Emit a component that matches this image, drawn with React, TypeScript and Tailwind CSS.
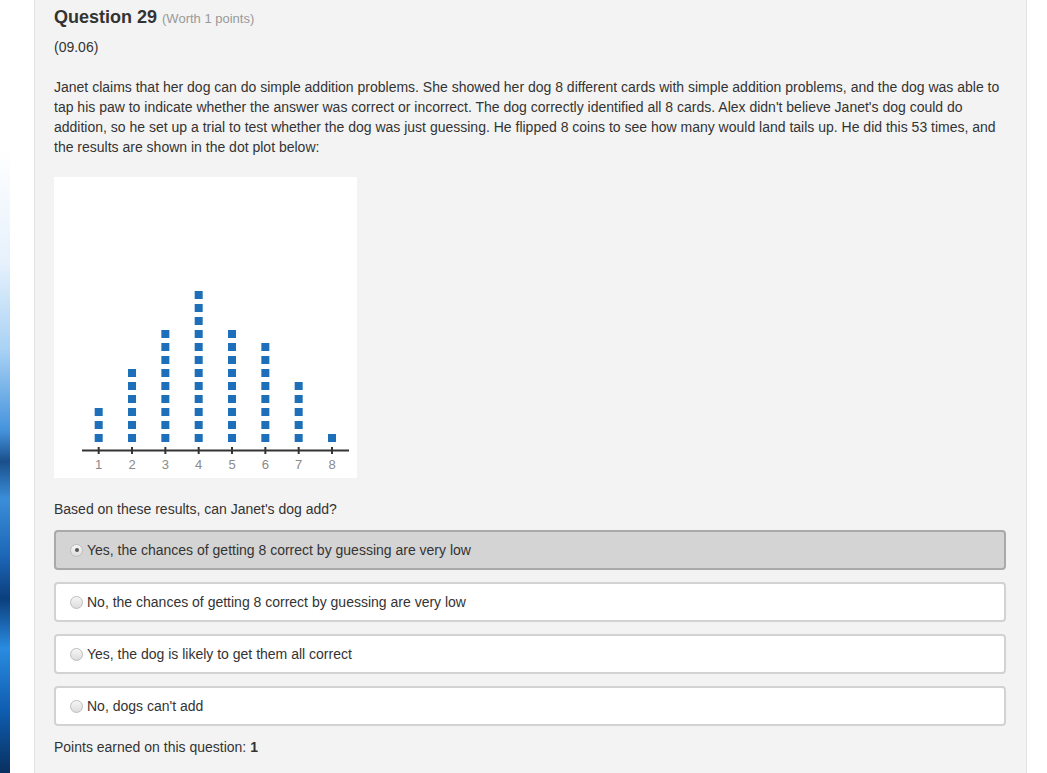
import React from "react";

const counts = [3, 6, 9, 12, 9, 8, 5, 1];

function DotPlot() {
  const x0 = 44.7;
  const step = 33.33;
  return (
    <svg width="303" height="301" viewBox="0 0 303 301" className="block">
      <rect x="0" y="0" width="303" height="301" fill="#ffffff" />
      {counts.map((n, i) =>
        Array.from({ length: n }).map((_, j) => (
          <rect
            key={`${i}-${j}`}
            x={x0 + step * i - 4}
            y={257 - 13 * j}
            width="8"
            height="8"
            fill="#1c6fb8"
          />
        ))
      )}
      <line x1="28" y1="273.5" x2="295" y2="273.5" stroke="#333" strokeWidth="2" />
      {counts.map((_, i) => (
        <g key={i}>
          <line x1={x0 + step * i} y1="270" x2={x0 + step * i} y2="277" stroke="#333" strokeWidth="2" />
          <text
            x={x0 + step * i}
            y="292"
            textAnchor="middle"
            fontSize="13"
            fill="#8a8a8a"
            fontFamily="Liberation Sans, Arial, sans-serif"
          >
            {i + 1}
          </text>
        </g>
      ))}
    </svg>
  );
}

function Radio({ checked }: { checked?: boolean }) {
  return (
    <span className="relative inline-flex h-[13px] w-[13px] shrink-0 items-center justify-center rounded-full border border-[#bdbdbd] bg-[linear-gradient(to_bottom,#f6f6f6,#dcdcdc)]">
      {checked && <span className="h-[4px] w-[4px] rounded-full bg-[#555]" />}
    </span>
  );
}

const options = [
  "Yes, the chances of getting 8 correct by guessing are very low",
  "No, the chances of getting 8 correct by guessing are very low",
  "Yes, the dog is likely to get them all correct",
  "No, dogs can't add",
];

export default function App() {
  return (
    <div className="flex h-[773px] w-full overflow-hidden bg-white font-['Liberation_Sans',Arial,sans-serif] text-[14px] text-[#333]">
      {/* left decoration */}
      <div className="flex w-[34px] shrink-0 flex-col">
        <div className="h-[150px]" />
        <div className="w-[10px] flex-1 bg-[linear-gradient(to_bottom,#ffffff_0%,#e6f1fc_18%,#a9d2f4_32%,#4593dd_45%,#1a4f8c_50%,#3a8ed8_56%,#1d67b8_65%,#0b3f7d_72%,#2a8be0_80%,#0f5db0_90%,#08305f_100%)]" />
      </div>

      {/* question panel */}
      <div className="w-[993px] shrink-0 border-x border-[#e2e2e2] bg-[#f3f3f3] px-[19px] pt-[7px]">
        <div className="flex h-[20px] items-baseline gap-[5px] leading-[20px]">
          <span className="text-[18px] font-bold text-[#333]">Question 29</span>
          <span className="text-[13px] text-[#999]">(Worth 1 points)</span>
        </div>
        <p className="mt-[10px] leading-[20px]">(09.06)</p>
        <p className="mt-[20px] w-[952px] leading-[20px]">
          Janet claims that her dog can do simple addition problems. She showed her dog 8 different cards with simple
          addition problems, and the dog was able to tap his paw to indicate whether the answer was correct or incorrect.
          The dog correctly identified all 8 cards. Alex didn't believe Janet's dog could do addition, so he set up a trial
          to test whether the dog was just guessing. He flipped 8 coins to see how many would land tails up. He did this
          53 times, and the results are shown in the dot plot below:
        </p>
        <div className="mt-[20px]">
          <DotPlot />
        </div>
        <p className="mt-[21px] leading-[20px]">Based on these results, can Janet's dog add?</p>
        <div className="mt-[11px] flex w-[952px] flex-col gap-[12px]">
          {options.map((o, i) => (
            <div
              key={o}
              className={
                i === 0
                  ? "flex h-[40px] items-center gap-[4px] rounded-[4px] border-2 border-[#a9a9a9] bg-[#d4d4d4] pl-[14px]"
                  : "flex h-[40px] items-center gap-[4px] rounded-[4px] border-2 border-[#d2d2d2] bg-white pl-[14px]"
              }
            >
              <Radio checked={i === 0} />
              <span className="leading-[20px]">{o}</span>
            </div>
          ))}
        </div>
        <p className="mt-[11px] leading-[20px]">
          Points earned on this question: <span className="font-bold">1</span>
        </p>
      </div>

      <div className="flex-1" />
    </div>
  );
}
